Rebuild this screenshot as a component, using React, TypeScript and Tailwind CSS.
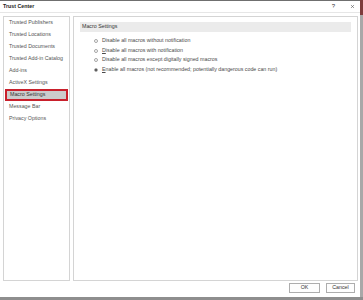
import { X } from 'lucide-react';

const navItems = [
  'Trusted Publishers',
  'Trusted Locations',
  'Trusted Documents',
  'Trusted Add-in Catalog',
  'Add-ins',
  'ActiveX Settings',
  'Macro Settings',
  'Message Bar',
  'Privacy Options',
];

function Radio({ checked }: { checked?: boolean }) {
  return (
    <span className="w-[4px] h-[4px] rounded-full border-[0.6px] border-[#a5a5a5] bg-white flex items-center justify-center shrink-0">
      {checked && <span className="w-[2px] h-[2px] rounded-full bg-[#333]" />}
    </span>
  );
}

export default function App() {
  return (
    <div
      className="w-[363px] h-[300px] bg-white flex flex-col overflow-hidden text-[#4a4a4a]"
      style={{ fontFamily: '"Liberation Sans", Arial, sans-serif' }}>
      <div className="flex flex-1 min-h-0">
        {/* dialog */}
        <div className="w-[360px] flex flex-col border-t border-[#6f6f6f]">
          {/* title bar */}
          <div className="h-[12px] flex items-center pl-[3px] pr-[5px] border-b border-[#e6e6e6]">
            <span className="text-[5.3px] font-semibold text-[#222] flex-1">Trust Center</span>
            <span className="text-[6px] text-[#333] mr-[15px]">?</span>
            <X className="w-[5px] h-[5px] text-[#444]" strokeWidth={2.5} />
          </div>

          {/* body */}
          <div className="flex gap-[3px] pl-[3px] pr-[2px] pt-[3px] h-[268px]">
            {/* left nav */}
            <div className="w-[67px] border border-[#d4d4d4] flex flex-col">
              {navItems.map(item =>
                item === 'Macro Settings' ? (
                  <div
                    key={item}
                    className="h-[12px] mx-[1px] flex items-center pl-[3px] bg-[#cccccc] border-2 border-[#c9202c] text-[5.3px] text-[#333]">
                    {item}
                  </div>
                ) : (
                  <div key={item} className="h-[12px] flex items-center pl-[5px] text-[5.3px] text-[#555]">
                    {item}
                  </div>
                )
              )}
            </div>

            {/* right content */}
            <div className="flex-1 border border-[#d4d4d4] pt-[5px] px-[6px]">
              <div className="h-[10px] bg-[#ebebeb] flex items-center pl-[2px] text-[5.3px] text-[#333]">
                Macro Settings
              </div>
              <div className="flex flex-col pl-[14px] pt-[4px]">
                <div className="h-[9.7px] flex items-center gap-[4px] text-[5.3px]">
                  <Radio /> Disable all macros without notification
                </div>
                <div className="h-[9.7px] flex items-center gap-[4px] text-[5.3px]">
                  <Radio /> <span><u>D</u>isable all macros with notification</span>
                </div>
                <div className="h-[9.7px] flex items-center gap-[4px] text-[5.3px]">
                  <Radio /> Disable all macros except digitally signed macros
                </div>
                <div className="h-[9.7px] flex items-center gap-[4px] text-[5.3px]">
                  <Radio checked />{' '}
                  <span><u>E</u>nable all macros (not recommended; potentially dangerous code can run)</span>
                </div>
              </div>
            </div>
          </div>

          {/* footer */}
          <div className="flex justify-end gap-[6px] pr-[5px] pt-[2px]">
            <button className="w-[31px] h-[10px] border border-[#adadad] bg-[#fdfdfd] text-[5.3px] text-[#333] flex items-center justify-center">
              OK
            </button>
            <button className="w-[29px] h-[10px] border border-[#adadad] bg-[#fdfdfd] text-[5.3px] text-[#333] flex items-center justify-center">
              Cancel
            </button>
          </div>
        </div>

        {/* right edge of window behind */}
        <div className="w-[3px] flex flex-col">
          <div className="h-[15px] bg-[#7d3b3b]" />
          <div className="flex-1 bg-[#a8a8a8]" />
        </div>
      </div>
      <div className="h-[3px] bg-[#8e8e8e]" />
    </div>
  );
}
